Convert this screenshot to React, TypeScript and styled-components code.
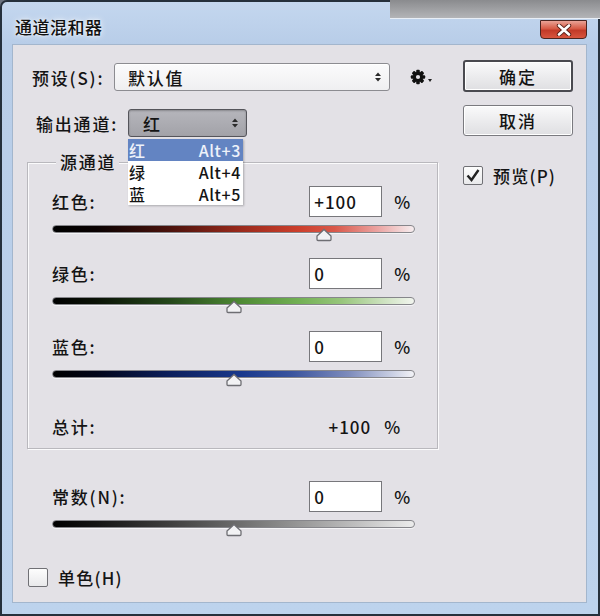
import React from 'react';
import styled, { createGlobalStyle } from 'styled-components';

const Global = createGlobalStyle`
  html, body { margin: 0; padding: 0; background: #6b7380; }
  body { font-family: "Noto Sans CJK SC", "Noto Sans", sans-serif; color: #141414; }
  * { box-sizing: border-box; }
`;

const Page = styled.div`
  position: relative;
  width: 600px;
  height: 616px;
`;

const Window = styled.div`
  width: 600px;
  height: 616px;
  border: 2px solid #25303c;
  border-radius: 7px 7px 0 0;
  background: linear-gradient(#c4d7ef 0px, #b8cde8 42px, #bdd3ed 100%);
  display: flex;
  flex-direction: column;
  overflow: hidden;
`;

const DesktopPatch = styled.div`
  position: absolute;
  top: 0;
  left: 390px;
  width: 210px;
  height: 19px;
  background: linear-gradient(#8a8b8e, #b3b4b7);
  border-bottom: 1px solid #e8eef6;
`;

const TitleBar = styled.div`
  height: 42px;
  flex: none;
  display: flex;
  align-items: center;
  justify-content: space-between;
  padding: 7px 11px 0 13px;
`;

const Title = styled.div`
  font-size: 17px;
  letter-spacing: 0.5px;
  font-weight: 500;
  color: #111;
  text-shadow: 0 0 6px rgba(255, 255, 255, 0.95), 0 0 2px rgba(255, 255, 255, 0.9);
`;

const CloseButton = styled.div`
  width: 47px;
  height: 19px;
  margin-top: 6px;
  border: 1px solid #4a2520;
  border-radius: 0 0 4px 4px;
  background: linear-gradient(#e9a396, #d65a45 45%, #c23a28 55%, #d8553e);
  display: flex;
  align-items: center;
  justify-content: center;
`;

const Content = styled.div`
  flex: 1;
  margin: 0 11px 11px 10px;
  background: #e3e1e6;
  border: 1px solid #a3b6cd;
  display: flex;
  gap: 25px;
  padding: 18px 0 0 14px;
  font-size: 17px;
  font-weight: 500;
  letter-spacing: 1.8px;
`;

const LeftColumn = styled.div`
  width: 411px;
  display: flex;
  flex-direction: column;
`;

const RightColumn = styled.div`
  width: 110px;
  margin-top: -3px;
  display: flex;
  flex-direction: column;
`;

const Row = styled.div<{ $mt?: number }>`
  position: relative;
  display: flex;
  align-items: center;
  height: 28px;
  margin-top: ${(p) => p.$mt ?? 0}px;
`;

const RowLabel = styled.div<{ $w: number; $pl: number }>`
  width: ${(p) => p.$w}px;
  padding-left: ${(p) => p.$pl}px;
  flex: none;
  white-space: nowrap;
`;

const Select = styled.div<{ $w: number; $open?: boolean }>`
  width: ${(p) => p.$w}px;
  height: 28px;
  flex: none;
  border: 1px solid ${(p) => (p.$open ? '#55555b' : '#8c8c91')};
  border-radius: 3px;
  background: ${(p) =>
    p.$open ? 'linear-gradient(#b6b6bc, #a2a2a8)' : 'linear-gradient(#fbfbfc, #efeff1)'};
  box-shadow: ${(p) => (p.$open ? 'inset 0 1px 2px rgba(0,0,0,0.25)' : 'inset 0 1px 0 #fff')};
  display: flex;
  align-items: center;
  justify-content: space-between;
  padding: 0 7px 0 ${(p) => (p.$open ? 14 : 13)}px;
`;

const GearWrap = styled.div`
  margin-left: 20px;
  display: flex;
  align-items: flex-end;
`;

const Dropdown = styled.div`
  position: absolute;
  left: 101px;
  top: 30px;
  width: 115px;
  background: #ffffff;
  box-shadow: 1px 1px 2px rgba(0, 0, 0, 0.25);
  z-index: 2;
  letter-spacing: 0.6px;
`;

const DropItem = styled.div<{ $active?: boolean }>`
  height: 22px;
  display: flex;
  align-items: center;
  justify-content: space-between;
  padding: 0 2px 0 1px;
  background: ${(p) => (p.$active ? '#6384c2' : 'transparent')};
  color: ${(p) => (p.$active ? '#eef2fa' : '#141414')};
  line-height: 20px;
  font-size: 16px;
`;

const Group = styled.div`
  position: relative;
  margin-top: 25px;
  border: 1px solid #b9b8bd;
  box-shadow: inset 1px 1px 0 #fbfbfc, 1px 1px 0 #fbfbfc;
  padding: 23px 22px 11px 24px;
  display: flex;
  flex-direction: column;
`;

const Legend = styled.div`
  position: absolute;
  top: -12px;
  left: 28px;
  padding: 0 3px 0 4px;
  background: #e3e1e6;
  line-height: 22px;
`;

const SliderBlock = styled.div<{ $mt?: number }>`
  display: flex;
  flex-direction: column;
  margin-top: ${(p) => p.$mt ?? 0}px;
`;

const ValueRow = styled.div`
  height: 31px;
  display: flex;
  align-items: center;
  justify-content: space-between;
`;

const ValueGroup = styled.div<{ $pr?: number }>`
  display: flex;
  align-items: center;
  padding-right: ${(p) => p.$pr ?? 3}px;
`;

const NumberBox = styled.div`
  width: 73px;
  height: 31px;
  border: 1px solid #77777b;
  background: #ffffff;
  padding-left: 4px;
  display: flex;
  align-items: center;
  letter-spacing: 1px;
`;

const Percent = styled.span<{ $ml?: number }>`
  margin-left: ${(p) => p.$ml ?? 12}px;
`;

const Track = styled.div<{ $colors: string }>`
  position: relative;
  margin-top: 8px;
  height: 8px;
  border-radius: 4px;
  border: 1px solid #86868b;
  background: linear-gradient(to right, ${(p) => p.$colors});
  box-shadow: 0 1px 0 #f4f4f6;
`;

const Thumb = styled.div`
  position: absolute;
  top: 2px;
  width: 16px;
  height: 14px;
  transform: translateX(-50%);
  display: flex;
`;

const TotalRow = styled.div`
  margin-top: 37px;
  height: 22px;
  display: flex;
  align-items: center;
  justify-content: space-between;
`;

const TotalValue = styled.span`
  letter-spacing: 1px;
`;

const Constant = styled.div`
  margin-top: 32px;
  padding: 0 23px 0 25px;
`;

const CheckRow = styled.div<{ $mt: number; $ml?: number }>`
  display: flex;
  align-items: center;
  gap: 10px;
  margin-top: ${(p) => p.$mt}px;
  margin-left: ${(p) => p.$ml ?? 0}px;
  letter-spacing: 1.2px;
`;

const CheckBox = styled.div`
  width: 20px;
  height: 19px;
  border: 1px solid #707075;
  border-radius: 2px;
  background: linear-gradient(#fdfdfd, #e9e9eb);
  display: flex;
  align-items: center;
  justify-content: center;
`;

const Button = styled.div<{ $primary?: boolean; $mt?: number }>`
  width: 110px;
  height: ${(p) => (p.$primary ? 32 : 31)}px;
  margin-top: ${(p) => p.$mt ?? 0}px;
  border: ${(p) => (p.$primary ? '2px solid #4a4a50' : '1px solid #7a7a7f')};
  border-radius: 3px;
  background: linear-gradient(#fafafb, #ececee 50%, #dfdfe2);
  box-shadow: inset 0 0 0 1px #ffffff;
  display: flex;
  align-items: center;
  justify-content: center;
  letter-spacing: 2px;
`;

const UpDown = () => (
  <svg width="8" height="12" viewBox="0 0 8 12">
    <path d="M1 5 L4 1.5 L7 5 Z" fill="#2a2a2a" />
    <path d="M1 7 L4 10.5 L7 7 Z" fill="#2a2a2a" />
  </svg>
);

const Gear = () => (
  <svg width="24" height="16" viewBox="0 0 24 16">
    <g transform="translate(8 8)" fill="#111">
      {[0, 45, 90, 135].map((a) => (
        <rect key={a} x="-1.8" y="-7.2" width="3.6" height="14.4" rx="1" transform={`rotate(${a})`} />
      ))}
      <circle r="5" />
      <circle r="2.1" fill="#e3e1e6" />
    </g>
    <path d="M18 10 L22 10 L20 13 Z" fill="#222" />
  </svg>
);

const ThumbShape = () => (
  <svg width="16" height="14" viewBox="0 0 16 14">
    <path
      d="M2 12.5 Q1 12.5 1 11.5 V8 L8 1.5 L15 8 V11.5 Q15 12.5 14 12.5 Z"
      fill="#f2f2f4"
      stroke="#6e6e73"
      strokeWidth="1.3"
    />
  </svg>
);

const CheckMark = () => (
  <svg width="16" height="15" viewBox="0 0 16 15">
    <path d="M2.5 7.5 L6.5 12 L13.5 2" fill="none" stroke="#222" strokeWidth="2.4" />
  </svg>
);

const CloseX = () => (
  <svg width="16" height="12" viewBox="0 0 16 12">
    <path d="M3 1.5 L13 10.5 M13 1.5 L3 10.5" stroke="#5a2018" strokeWidth="4.4" strokeLinecap="round" />
    <path d="M3 1.5 L13 10.5 M13 1.5 L3 10.5" stroke="#ffffff" strokeWidth="2.6" strokeLinecap="round" />
  </svg>
);

type SliderProps = { label: string; value: string; pct: number; colors: string; mt?: number };

const Slider = ({ label, value, pct, colors, mt }: SliderProps) => (
  <SliderBlock $mt={mt}>
    <ValueRow>
      <span>{label}</span>
      <ValueGroup>
        <NumberBox>{value}</NumberBox>
        <Percent>%</Percent>
      </ValueGroup>
    </ValueRow>
    <Track $colors={colors}>
      <Thumb style={{ left: `${pct}%` }}>
        <ThumbShape />
      </Thumb>
    </Track>
  </SliderBlock>
);

const RED = '#000 0%, #0a0202 12%, #4a120c 32%, #9a2a1c 52%, #cc3f2c 68%, #d9584a 78%, #eba4a2 90%, #f6eef0 100%';
const GREEN = '#000 0%, #0a1206 12%, #24461a 32%, #4e8a34 52%, #72b054 68%, #98c67c 80%, #cfe3c2 92%, #f2f5ef 100%';
const BLUE = '#000 0%, #02061a 12%, #0c1f5c 32%, #18388c 52%, #3a549e 66%, #7e8cbc 82%, #c9cfe3 94%, #f3f3f7 100%';
const GRAY = '#000 0%, #141414 12%, #3e3e3e 32%, #6e6e6e 52%, #969696 68%, #bfbfbf 84%, #ececec 100%';

export default function App() {
  return (
    <>
      <Global />
      <Page>
        <Window>
          <TitleBar>
            <Title>通道混和器</Title>
            <CloseButton>
              <CloseX />
            </CloseButton>
          </TitleBar>
          <Content>
            <LeftColumn>
              <Row>
                <RowLabel $w={87} $pl={5}>预设(S):</RowLabel>
                <Select $w={276}>
                  <span>默认值</span>
                  <UpDown />
                </Select>
                <GearWrap>
                  <Gear />
                </GearWrap>
              </Row>
              <Row $mt={18}>
                <RowLabel $w={101} $pl={9}>输出通道:</RowLabel>
                <Select $w={119} $open>
                  <span>红</span>
                  <UpDown />
                </Select>
                <Dropdown>
                  <DropItem $active>
                    <span>红</span>
                    <span>Alt+3</span>
                  </DropItem>
                  <DropItem>
                    <span>绿</span>
                    <span>Alt+4</span>
                  </DropItem>
                  <DropItem>
                    <span>蓝</span>
                    <span>Alt+5</span>
                  </DropItem>
                </Dropdown>
              </Row>
              <Group>
                <Legend>源通道</Legend>
                <Slider label="红色:" value="+100" pct={75} colors={RED} />
                <Slider label="绿色:" value="0" pct={50} colors={GREEN} mt={25} />
                <Slider label="蓝色:" value="0" pct={50} colors={BLUE} mt={26} />
                <TotalRow>
                  <span>总计:</span>
                  <ValueGroup $pr={13}>
                    <TotalValue>+100</TotalValue>
                    <Percent $ml={13}>%</Percent>
                  </ValueGroup>
                </TotalRow>
              </Group>
              <Constant>
                <Slider label="常数(N):" value="0" pct={50} colors={GRAY} />
              </Constant>
              <CheckRow $mt={37} $ml={1}>
                <CheckBox />
                <span>单色(H)</span>
              </CheckRow>
            </LeftColumn>
            <RightColumn>
              <Button $primary>确定</Button>
              <Button $mt={13}>取消</Button>
              <CheckRow $mt={27}>
                <CheckBox>
                  <CheckMark />
                </CheckBox>
                <span>预览(P)</span>
              </CheckRow>
            </RightColumn>
          </Content>
        </Window>
        <DesktopPatch />
      </Page>
    </>
  );
}
